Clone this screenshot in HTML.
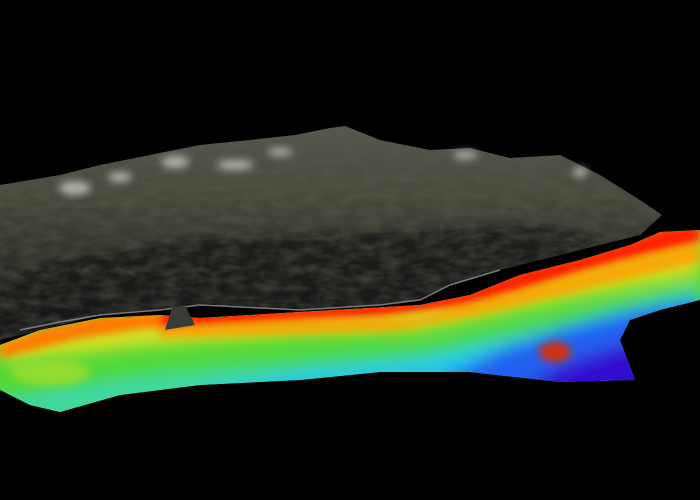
<!DOCTYPE html>
<html><head><meta charset="utf-8"><style>
html,body{margin:0;padding:0;background:#000;width:700px;height:500px;overflow:hidden}
</style></head><body>
<svg width="700" height="500" viewBox="0 0 700 500" xmlns="http://www.w3.org/2000/svg">
<defs>
<linearGradient id="mt" x1="0" y1="0" x2="0" y2="1">
<stop offset="0" stop-color="#5a5850"/>
<stop offset="0.35" stop-color="#44483a"/>
<stop offset="0.65" stop-color="#2a2c26"/>
<stop offset="1" stop-color="#141414"/>
</linearGradient>
<filter id="bl"><feGaussianBlur stdDeviation="4"/></filter>
<filter id="bl2"><feGaussianBlur stdDeviation="8"/></filter>
<filter id="noise" x="0" y="0" width="100%" height="100%">
<feTurbulence type="fractalNoise" baseFrequency="0.05 0.12" numOctaves="3" seed="4"/>
<feColorMatrix type="matrix" values="0 0 0 0 0.1  0 0 0 0 0.1  0 0 0 0 0.08  0 0 0 -1.6 1.1"/>
</filter>
<clipPath id="mclip"><polygon points="0,185 30,180 60,175 100,165 150,155 200,145 250,140 295,135 330,128 345,126 380,140 430,150 470,148 510,158 560,155 600,175 640,200 662,215 640,235 600,245 560,255 500,270 450,285 420,300 380,305 300,310 200,305 160,310 100,315 40,330 0,340"/></clipPath>
<clipPath id="strip"><polygon points="0,345 40,330 100,318 160,315 200,318 300,312 420,305 470,295 520,275 580,260 630,245 660,232 700,230 700,300 660,310 630,320 620,340 635,380 560,382 470,372 380,372 300,380 200,385 120,395 60,412 30,405 0,390"/></clipPath>
</defs>
<rect width="700" height="500" fill="#000"/>
<g clip-path="url(#strip)">
<rect x="0" y="220" width="700" height="200" fill="#50d838"/>
<g filter="url(#bl2)">
<polygon fill="#d8e020" points="0,340 160,312 420,300 700,225 700,275 560,300 420,330 300,335 160,345 60,355 0,362"/>
<polygon fill="#40d8a0" points="0,398 60,385 160,372 300,360 420,350 560,320 700,285 700,420 0,420"/>
<polygon fill="#20c8e8" points="200,390 300,372 420,360 520,340 620,310 700,295 700,420 200,420"/>
<polygon fill="#2060f0" points="440,380 500,350 560,330 640,310 700,300 700,420 440,420"/>
<polygon fill="#3010d0" points="520,390 560,365 620,345 700,330 700,420"/>
</g>
<g filter="url(#bl)">
<polygon fill="#ff2200" points="150,312 300,308 420,300 470,290 520,270 580,255 630,240 665,228 700,225 700,242 640,256 580,272 520,290 460,306 380,316 260,322 150,328"/>
<polygon fill="#ff7a00" points="0,345 40,330 100,316 160,312 160,326 80,338 0,358"/>
<polygon fill="#ff9a00" opacity="0.8" points="160,328 300,322 420,318 520,292 640,258 700,244 700,262 600,285 500,310 400,330 300,334 160,338"/>
<ellipse cx="555" cy="352" rx="16" ry="10" fill="#d03010"/>
<ellipse cx="50" cy="372" rx="40" ry="14" fill="#90dc30"/>
</g>
</g>
<!-- mountain -->
<g clip-path="url(#mclip)">
<rect x="0" y="120" width="700" height="230" fill="url(#mt)"/>
<polygon fill="#161614" opacity="0.75" filter="url(#bl)" points="60,260 200,240 320,235 440,230 520,225 600,235 560,255 500,270 450,285 420,300 380,305 300,310 200,305 160,310 100,315 40,330 0,340 0,290"/>
<rect x="0" y="120" width="700" height="230" filter="url(#noise)" opacity="0.6"/>
</g>
<polyline fill="none" stroke="#b8b8c8" stroke-width="1.5" opacity="0.6" points="20,330 60,322 100,315 160,310 200,305 300,310 380,305 420,300 450,285 500,270"/>
<g fill="#d8d8d8" opacity="0.7" filter="url(#bl)">
<ellipse cx="75" cy="188" rx="16" ry="7"/>
<ellipse cx="120" cy="177" rx="12" ry="5"/>
<ellipse cx="175" cy="162" rx="14" ry="6"/>
<ellipse cx="235" cy="165" rx="18" ry="5"/>
<ellipse cx="280" cy="152" rx="12" ry="4"/>
<ellipse cx="465" cy="155" rx="12" ry="4"/>
<ellipse cx="580" cy="172" rx="7" ry="5"/>
</g>
<polygon fill="#3a3a36" points="165,330 172,308 185,305 195,325"/>
</svg>
</body></html>
